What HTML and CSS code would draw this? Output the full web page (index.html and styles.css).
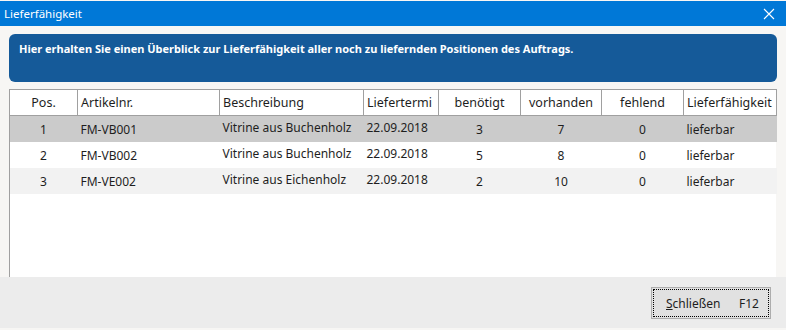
FILE: index.html
```html
<!DOCTYPE html>
<html lang="de">
<head>
<meta charset="UTF-8">
<title>Lieferfähigkeit</title>
<link rel="stylesheet" href="styles.css">
</head>
<body>
<div class="window">
  <div class="titlebar">
    <span class="title">Lieferfähigkeit</span>
    <svg class="close" width="12" height="12" viewBox="0 0 12 12">
      <path d="M1 1 L11 11 M11 1 L1 11" stroke="#fff" stroke-width="1.1" fill="none"/>
    </svg>
  </div>

  <div class="content">
    <div class="banner">Hier erhalten Sie einen Überblick zur Lieferfähigkeit aller noch zu liefernden Positionen des Auftrags.</div>

    <div class="grid">
      <table>
        <colgroup>
          <col style="width:68px">
          <col style="width:142px">
          <col style="width:144px">
          <col style="width:75px">
          <col style="width:82px">
          <col style="width:81px">
          <col style="width:82px">
          <col style="width:93px">
        </colgroup>
        <thead>
          <tr>
            <th class="c">Pos.</th>
            <th>Artikelnr.</th>
            <th>Beschreibung</th>
            <th>Liefertermi</th>
            <th class="c">benötigt</th>
            <th class="c">vorhanden</th>
            <th class="c">fehlend</th>
            <th>Lieferfähigkeit</th>
          </tr>
        </thead>
        <tbody>
          <tr class="selected">
            <td class="c">1</td>
            <td>FM-VB001</td>
            <td class="up">Vitrine aus Buchenholz</td>
            <td class="up">22.09.2018</td>
            <td class="c">3</td>
            <td class="c">7</td>
            <td class="c">0</td>
            <td>lieferbar</td>
          </tr>
          <tr>
            <td class="c">2</td>
            <td>FM-VB002</td>
            <td class="up">Vitrine aus Buchenholz</td>
            <td class="up">22.09.2018</td>
            <td class="c">5</td>
            <td class="c">8</td>
            <td class="c">0</td>
            <td>lieferbar</td>
          </tr>
          <tr class="alt">
            <td class="c">3</td>
            <td>FM-VE002</td>
            <td class="up">Vitrine aus Eichenholz</td>
            <td class="up">22.09.2018</td>
            <td class="c">2</td>
            <td class="c">10</td>
            <td class="c">0</td>
            <td>lieferbar</td>
          </tr>
        </tbody>
      </table>
    </div>
  </div>

  <div class="footer">
    <button class="btn"><div class="btn-inner"><span><u>S</u>chließen</span><span>F12</span></div></button>
  </div>
</div>
</body>
</html>
```

FILE: styles.css
```css
body {
  margin: 0;
  font-family: 'Noto Sans', 'Open Sans', sans-serif;
  font-size: 12px;
  color: #1e1e1e;
  background: #f7f6f4;
}
.window {
  width: 786px;
  height: 330px;
  display: flex;
  flex-direction: column;
  background: #f7f6f4;
}
.titlebar {
  height: 25px;
  margin-top: 1px;
  background: #0078d7;
  color: #fff;
  display: flex;
  align-items: center;
  justify-content: space-between;
  padding: 0 11px 0 4px;
}
.title {
  font-size: 11.5px;
}
.content {
  flex: 1;
  display: flex;
  flex-direction: column;
  gap: 7px;
  padding: 8px 9px 0 9px;
}
.banner {
  height: 48px;
  box-sizing: border-box;
  background: #155a99;
  border-radius: 6px;
  color: #fff;
  font-weight: bold;
  font-size: 11px;
  padding: 7px 10px;
}
.grid {
  flex: 1;
  background: #fff;
  border-left: 1px solid #a0a0a0;
  margin-right: 1px;
}
table {
  table-layout: fixed;
  border-collapse: collapse;
  width: 767px;
  margin-left: -1px;
}
th, td {
  height: 26px;
  padding: 0 3px;
  text-align: left;
  white-space: nowrap;
  overflow: hidden;
  font-weight: normal;
  box-sizing: border-box;
}
th {
  font-size: 12.5px;
  border: 1px solid #a0a0a0;
}
td {
  font-size: 12px;
  padding-top: 1px;
}
td.up {
  padding-top: 0;
  padding-bottom: 3px;
}
.c {
  text-align: center;
}
tr.selected td {
  background: #cbcbcb;
}
tr.alt td {
  background: #f2f2f2;
}
.footer {
  height: 51px;
  margin-bottom: 2px;
  background: #ececec;
  display: flex;
  justify-content: flex-end;
  align-items: flex-start;
  padding: 10px 15px 0 0;
  box-sizing: border-box;
}
.btn {
  width: 120px;
  height: 32px;
  box-sizing: border-box;
  background: #e1e1e1;
  border: 1px solid #adadad;
  font-family: inherit;
  font-size: 12px;
  color: #1e1e1e;
  padding: 0;
  outline: 1px dotted #000;
  outline-offset: -3px;
}
.btn-inner {
  display: flex;
  justify-content: space-between;
  align-items: center;
  padding: 0 11px 0 14px;
}
```
